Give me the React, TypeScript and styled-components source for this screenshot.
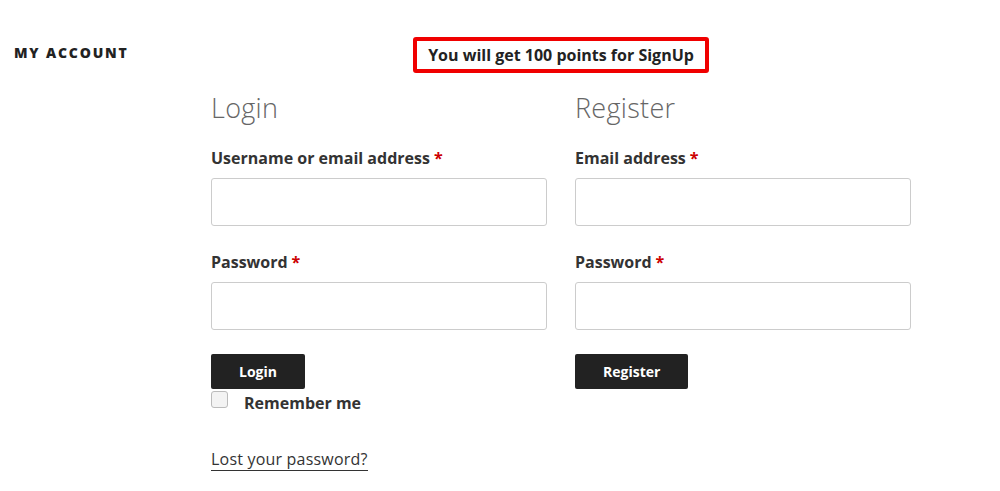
import React from "react";
import styled, { createGlobalStyle } from "styled-components";

const GlobalStyle = createGlobalStyle`
  html, body {
    margin: 0;
    padding: 0;
    background: #ffffff;
  }
  body {
    font-family: "Open Sans", "Liberation Sans", Arial, sans-serif;
    color: #333333;
  }
  * { box-sizing: border-box; }
`;

const Page = styled.div`
  display: flex;
  width: 1000px;
  min-height: 491px;
`;

const Sidebar = styled.aside`
  width: 211px;
  flex: none;
  padding: 43px 0 0 14px;
`;

const PageTitle = styled.h1`
  margin: 0;
  font-size: 14px;
  line-height: 20px;
  font-weight: 800;
  letter-spacing: 0.13em;
  text-transform: uppercase;
  color: #222222;
`;

const Content = styled.main`
  width: 700px;
  flex: none;
  display: flex;
  flex-direction: column;
  padding-top: 37px;
`;

const Notice = styled.p`
  align-self: center;
  margin: 0;
  padding: 4px 11px 4px;
  border: 4px solid #f00000;
  border-radius: 3px;
  font-size: 16px;
  line-height: 20px;
  font-weight: 700;
  color: #222222;
`;

const Columns = styled.div`
  display: grid;
  grid-template-columns: 336px 336px;
  column-gap: 28px;
  margin-top: 17px;
`;

const Column = styled.section`
  display: flex;
  flex-direction: column;
  align-items: flex-start;
`;

const Heading = styled.h2`
  margin: 0 0 20px;
  font-size: 27px;
  line-height: 36px;
  font-weight: 300;
  letter-spacing: 0.3px;
  color: #666666;
`;

const Label = styled.label<{ $first?: boolean }>`
  display: block;
  margin: ${(p) => (p.$first ? "0" : "24px")} 0 8px;
  font-size: 16px;
  line-height: 24px;
  font-weight: 700;
  color: #333333;
`;

const Required = styled.span`
  color: #cc0000;
  margin-left: 4px;
`;

const Input = styled.input`
  display: block;
  width: 100%;
  height: 48px;
  margin: 0;
  padding: 0 12px;
  border: 1px solid #cccccc;
  border-radius: 3px;
  background: #ffffff;
  font: inherit;
  outline: none;
`;

const Button = styled.button`
  margin-top: 24px;
  height: 35px;
  padding: 0 28px;
  border: none;
  border-radius: 2px;
  background: #222222;
  color: #ffffff;
  font-family: inherit;
  font-size: 14px;
  font-weight: 700;
  line-height: 1;
  cursor: pointer;
`;

const RememberRow = styled.label`
  display: flex;
  align-items: flex-start;
  gap: 16px;
  margin-top: 2px;
  font-size: 16px;
  line-height: 24px;
  font-weight: 700;
  color: #333333;
`;

const Checkbox = styled.input`
  appearance: none;
  width: 17px;
  height: 17px;
  margin: 0;
  border: 1px solid #bbbbbb;
  border-radius: 3px;
  background: #f3f3f3;
`;

const LostLink = styled.a`
  margin-top: 32px;
  font-size: 16px;
  line-height: 24px;
  letter-spacing: 0.2px;
  color: #333333;
  text-decoration: none;
  box-shadow: inset 0 -1px 0 #333333;
`;

export default function App() {
  return (
    <>
      <GlobalStyle />
      <Page>
        <Sidebar>
          <PageTitle>My Account</PageTitle>
        </Sidebar>
        <Content>
          <Notice>You will get 100 points for SignUp</Notice>
          <Columns>
            <Column>
              <Heading>Login</Heading>
              <Label $first>
                Username or email address<Required>*</Required>
              </Label>
              <Input type="text" />
              <Label>
                Password<Required>*</Required>
              </Label>
              <Input type="password" />
              <Button type="button">Login</Button>
              <RememberRow>
                <Checkbox type="checkbox" />
                Remember me
              </RememberRow>
              <LostLink href="#">Lost your password?</LostLink>
            </Column>
            <Column>
              <Heading>Register</Heading>
              <Label $first>
                Email address<Required>*</Required>
              </Label>
              <Input type="email" />
              <Label>
                Password<Required>*</Required>
              </Label>
              <Input type="password" />
              <Button type="button">Register</Button>
            </Column>
          </Columns>
        </Content>
      </Page>
    </>
  );
}
